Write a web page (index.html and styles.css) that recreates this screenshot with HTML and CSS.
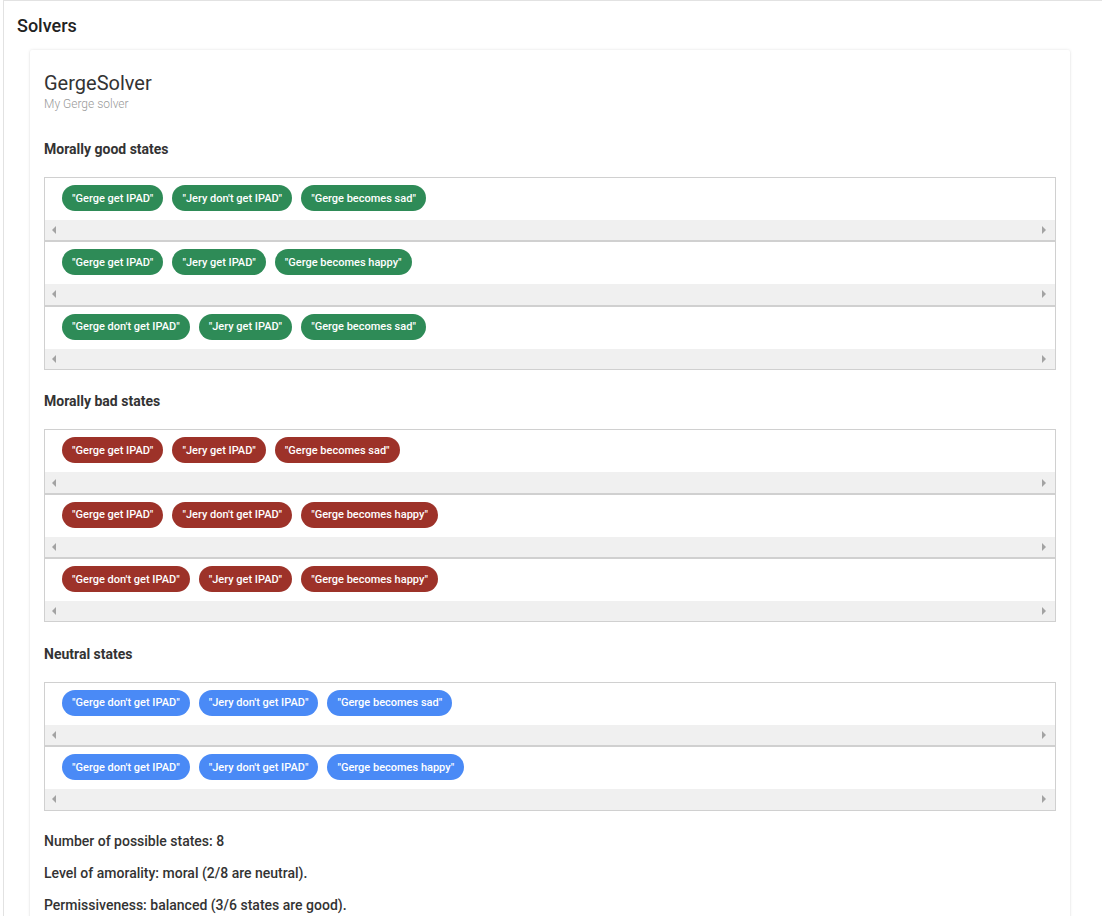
FILE: index.html
```html
<!DOCTYPE html>
<html>
<head>
<meta charset="utf-8">
<link rel="stylesheet" href="styles.css">
</head>
<body>
<div class="page">
  <h1 class="page-title">Solvers</h1>
  <div class="card">
    <div class="card-title">GergeSolver</div>
    <div class="card-sub">My Gerge solver</div>

    <h2 class="section">Morally good states</h2>
    <div class="box">
      <div class="row">
        <div class="chips"><span class="chip good">"Gerge get IPAD"</span><span class="chip good">"Jery don't get IPAD"</span><span class="chip good">"Gerge becomes sad"</span></div>
        <div class="sb"><span class="al"></span><span class="ar"></span></div>
      </div>
      <div class="row">
        <div class="chips"><span class="chip good">"Gerge get IPAD"</span><span class="chip good">"Jery get IPAD"</span><span class="chip good">"Gerge becomes happy"</span></div>
        <div class="sb"><span class="al"></span><span class="ar"></span></div>
      </div>
      <div class="row">
        <div class="chips"><span class="chip good">"Gerge don't get IPAD"</span><span class="chip good">"Jery get IPAD"</span><span class="chip good">"Gerge becomes sad"</span></div>
        <div class="sb"><span class="al"></span><span class="ar"></span></div>
      </div>
    </div>

    <h2 class="section">Morally bad states</h2>
    <div class="box">
      <div class="row">
        <div class="chips"><span class="chip bad">"Gerge get IPAD"</span><span class="chip bad">"Jery get IPAD"</span><span class="chip bad">"Gerge becomes sad"</span></div>
        <div class="sb"><span class="al"></span><span class="ar"></span></div>
      </div>
      <div class="row">
        <div class="chips"><span class="chip bad">"Gerge get IPAD"</span><span class="chip bad">"Jery don't get IPAD"</span><span class="chip bad">"Gerge becomes happy"</span></div>
        <div class="sb"><span class="al"></span><span class="ar"></span></div>
      </div>
      <div class="row">
        <div class="chips"><span class="chip bad">"Gerge don't get IPAD"</span><span class="chip bad">"Jery get IPAD"</span><span class="chip bad">"Gerge becomes happy"</span></div>
        <div class="sb"><span class="al"></span><span class="ar"></span></div>
      </div>
    </div>

    <h2 class="section">Neutral states</h2>
    <div class="box">
      <div class="row">
        <div class="chips"><span class="chip neutral">"Gerge don't get IPAD"</span><span class="chip neutral">"Jery don't get IPAD"</span><span class="chip neutral">"Gerge becomes sad"</span></div>
        <div class="sb"><span class="al"></span><span class="ar"></span></div>
      </div>
      <div class="row">
        <div class="chips"><span class="chip neutral">"Gerge don't get IPAD"</span><span class="chip neutral">"Jery don't get IPAD"</span><span class="chip neutral">"Gerge becomes happy"</span></div>
        <div class="sb"><span class="al"></span><span class="ar"></span></div>
      </div>
    </div>

    <p class="stat first">Number of possible states: 8</p>
    <p class="stat">Level of amorality: moral (2/8 are neutral).</p>
    <p class="stat">Permissiveness: balanced (3/6 states are good).</p>
  </div>
</div>
</body>
</html>
```

FILE: styles.css
```css
html, body {
  margin: 0;
  padding: 0;
  background: #fff;
  font-family: Roboto, "Liberation Sans", sans-serif;
  color: #333;
}
.page {
  margin-left: 3px;
  width: 1092px;
  min-height: 1000px;
  border: 1px solid #e2e2e2;
  border-bottom: none;
  padding: 0 26px 0 26px;
}
.page-title {
  margin: 0 0 0 -13px;
  padding-top: 13px;
  height: 36px;
  font-size: 18px;
  line-height: 24px;
  font-weight: 500;
  color: #222;
}
.card {
  box-sizing: border-box;
  width: 1040px;
  background: #fff;
  box-shadow: 0 0 3px rgba(0,0,0,0.12), 0 1px 2px rgba(0,0,0,0.06);
  border-radius: 2px;
  padding: 21px 14px 20px 14px;
}
.card-title {
  font-size: 20px;
  line-height: 24px;
  font-weight: 400;
  color: #333;
}
.card-sub {
  font-size: 12px;
  line-height: 14px;
  margin-top: 2px;
  color: #999;
  font-weight: 300;
}
.section {
  margin: 30px 0 20px 0;
  font-size: 14px;
  line-height: 16px;
  font-weight: 700;
  color: #333;
}
.box + .section {
  margin-top: 23.5px;
  margin-bottom: 20px;
}
.row {
  border: 1px solid #d0d0d0;
  width: 1010px;
}
.chips {
  display: flex;
  gap: 9px;
  padding: 7px 17px 9px 17px;
  height: 26px;
}
.chip {
  display: inline-flex;
  align-items: center;
  height: 26px;
  border-radius: 13px;
  padding: 0 10px;
  font-size: 11px;
  font-weight: 500;
  color: #fff;
  white-space: nowrap;
}
.chip.good { background: #2e8b57; }
.chip.bad { background: #9d3229; }
.chip.neutral { background: #4a8af6; }
.sb {
  height: 20.34px;
  background: #f0f0f0;
  display: flex;
  align-items: center;
  justify-content: space-between;
  padding: 0 9px 0 7px;
}
.al {
  width: 0;
  height: 0;
  border-top: 4px solid transparent;
  border-bottom: 4px solid transparent;
  border-right: 4px solid #a3a3a3;
}
.ar {
  width: 0;
  height: 0;
  border-top: 4px solid transparent;
  border-bottom: 4px solid transparent;
  border-left: 4px solid #a3a3a3;
}
.stat {
  margin: 16px 0 0 0;
  font-size: 14px;
  line-height: 16px;
  font-weight: 500;
  color: #333;
}
.stat.first {
  margin-top: 22px;
}
```
